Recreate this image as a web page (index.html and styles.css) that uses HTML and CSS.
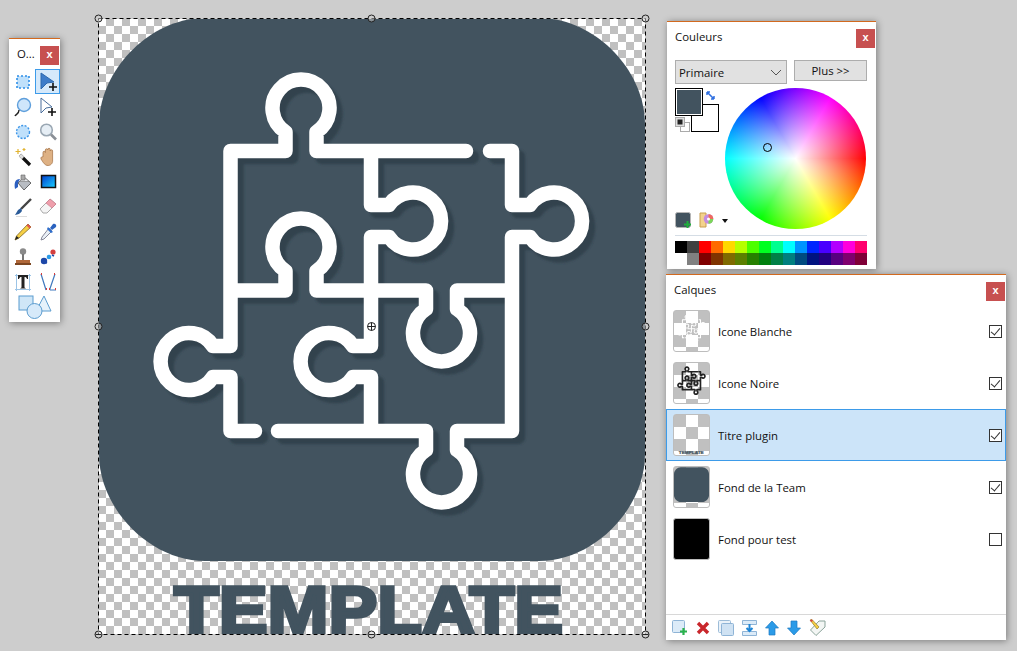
FILE: index.html
```html
<!DOCTYPE html>
<html lang="fr">
<head>
    <meta charset="UTF-8">
    <meta name="viewport" content="width=device-width, initial-scale=1.0">
    <title>Template</title>
    <link rel="stylesheet" href="styles.css">
</head>
<body>
    <!-- image being edited -->
    <div class="canvas">
        <svg class="canvas-art" viewBox="99 19 546 615">
            <defs>
                <filter id="soft"><feGaussianBlur stdDeviation="0.7"/></filter>
                <filter id="softer"><feGaussianBlur stdDeviation="1.1"/></filter>
                <path id="puzzle" fill="none" stroke-linecap="round" stroke-linejoin="round" d="M466 151H316.5V132A28.5 28.5 0 1 0 285.5 132V151H230.5V346H213A28.5 28.5 0 1 0 213 377H230.5V431H255M490 151H512V205H530A28.5 28.5 0 1 1 530 237H512V431H457V450A28.5 28.5 0 1 1 426 450V431H278M230.5 290.5H285.5V271A28.5 28.5 0 1 1 316.5 271V290.5H426V309A28.5 28.5 0 1 0 457 309V290.5H512M371 151V205H389A28.5 28.5 0 1 1 389 237H371V346H353A28.5 28.5 0 1 0 353 377H371V431"/>
                <path id="plaque" d="M205 18H539C594 18 645 69 645 125V454C645 509 594 561 539 561H205C150 561 99 509 99 454V125C99 70 150 18 205 18Z"/>
            </defs>
            <use href="#plaque" fill="#42535f"/>
            <use href="#puzzle" stroke="#33424d" stroke-width="14.5" transform="translate(6 6)" filter="url(#softer)"/>
            <use href="#puzzle" stroke="#fff" stroke-width="14.5" filter="url(#soft)"/>
            <text class="logo-title" x="174" y="633" textLength="389" lengthAdjust="spacingAndGlyphs" filter="url(#soft)">TEMPLATE</text>
        </svg>
    </div>

    <!-- selection outline and handles -->
    <svg class="selection" viewBox="0 0 1017 651">
        <rect x="98.5" y="18.5" width="547" height="616" fill="none" stroke="#000" stroke-dasharray="4 3"/>
        <g fill="#cdcdcd" fill-opacity="0.5" stroke="#222">
            <circle cx="98.5" cy="18.5" r="3.5"/>
            <circle cx="371.5" cy="18.5" r="3.5"/>
            <circle cx="645.5" cy="18.5" r="3.5"/>
            <circle cx="98.5" cy="326.5" r="3.5"/>
            <circle cx="645.5" cy="326.5" r="3.5"/>
            <circle cx="98.5" cy="634.5" r="3.5"/>
            <circle cx="371.5" cy="634.5" r="3.5"/>
            <circle cx="645.5" cy="634.5" r="3.5"/>
            <path d="M95.5 634.5h6M368.5 634.5h6M642.5 634.5h6" fill="none"/>
            <circle cx="371.5" cy="326.5" r="4" fill="#fff" fill-opacity="0.8"/>
            <path d="M371.5 322.5v8M367.5 326.5h8" fill="none"/>
        </g>
    </svg>

    <!-- tools window -->
    <div class="window tools">
        <div class="window-head tools-head">
            <span class="window-title">O...</span>
            <span class="close">x</span>
        </div>
        <div class="tool-grid">
            <span class="tool"><svg viewBox="0 0 20 20"><rect x="4" y="4" width="12" height="12" fill="#bfe0fb" stroke="#2f8fe8" stroke-width="1.6" stroke-dasharray="2 2"/></svg></span>
            <span class="tool tool-on"><svg viewBox="0 0 20 20"><path d="M3 1L16 10L9 11L3 17Z" fill="#3d7cc9" stroke="#2d68ad"/><path d="M15 11v8M11 15h8" stroke="#111" stroke-width="1.6"/></svg></span>
            <span class="tool"><svg viewBox="0 0 20 20"><circle cx="11" cy="8" r="6.5" fill="#cfe6fb" stroke="#5f9fdc" stroke-width="1.4"/><path d="M6 13C6 17 3 17 2 19" fill="none" stroke="#222" stroke-width="1.4"/></svg></span>
            <span class="tool"><svg viewBox="0 0 20 20"><path d="M3 1L14 10L8 11L3 16Z" fill="#fff" stroke="#4a6f9c"/><path d="M14 11v8M10 15h8" stroke="#111" stroke-width="1.6"/></svg></span>
            <span class="tool"><svg viewBox="0 0 20 20"><circle cx="10" cy="10" r="6.5" fill="#bfe0fb" stroke="#3c95e8" stroke-width="1.4" stroke-dasharray="2 1.5"/></svg></span>
            <span class="tool"><svg viewBox="0 0 20 20"><circle cx="8.5" cy="8" r="5.8" fill="#e6eef5" stroke="#9aa7b3" stroke-width="1.6"/><path d="M13 12.5L18 17.5" stroke="#8a8f96" stroke-width="2.6"/></svg></span>
            <span class="tool"><svg viewBox="0 0 20 20"><path d="M7 8L17 18" stroke="#111" stroke-width="3.2"/><path d="M7 8L10 11" stroke="#ddd" stroke-width="3.2"/><path d="M5 2v5M2.500 4.500h5M11 1v3M9.500 2.500h3" stroke="#e2b431" stroke-width="1.2"/></svg></span>
            <span class="tool"><svg viewBox="0 0 20 20"><path d="M5 10V5.500a1.200 1.200 0 0 1 2.400 0V3a1.200 1.200 0 0 1 2.400 0V2.500a1.200 1.200 0 0 1 2.400 0V4a1.200 1.200 0 0 1 2.400 0V13C15 17 12 18.500 10 18.500C7 18.500 5.500 16 3 12C2.500 10 4 9.500 5 10Z" fill="#deb184" stroke="#a9794e" stroke-width="0.8"/></svg></span>
            <span class="tool"><svg viewBox="0 0 20 20"><path d="M11 5L18 11L11 18L5 11Z" fill="#b9bdc3" stroke="#666"/><path d="M6.500 9.500H16L11 5Z" fill="#e7e9ec" stroke="#777" stroke-width="0.6"/><path d="M8 3h4v5h-4z" fill="#aaa" stroke="#666" stroke-width="0.6"/><path d="M7 7C2 7 1 11 2 17L5 15V11Z" fill="#2c5fc0"/></svg></span>
            <span class="tool"><svg viewBox="0 0 20 20"><defs><linearGradient id="blend" x1="0" y1="0" x2="1" y2="1"><stop offset="0" stop-color="#003ccf"/><stop offset="1" stop-color="#19d1ff"/></linearGradient></defs><rect x="3.500" y="3.500" width="14" height="12" fill="url(#blend)" stroke="#111" stroke-width="1.500"/></svg></span>
            <span class="tool"><svg viewBox="0 0 20 20"><path d="M18 2L8 12" stroke="#444" stroke-width="2.400"/><path d="M8 11L5 13C4 15 3 16 2 18C5 17.500 7 17 9 14Z" fill="#2b5b98"/><path d="M3 19.500H14" stroke="#ddd"/></svg></span>
            <span class="tool"><svg viewBox="0 0 20 20"><path d="M12 2L18 7L9 16H5L2 12Z" fill="#f5f5f5" stroke="#aaa"/><path d="M12 2L18 7L14 11L8 6Z" fill="#ef9fac" stroke="#cf7b8c" stroke-width="0.700"/></svg></span>
            <span class="tool"><svg viewBox="0 0 20 20"><path d="M15 2L18 5L6 16L2 18L3.500 14Z" fill="#f5cf45" stroke="#7d6420" stroke-width="0.800"/><path d="M15 2L18 5L16.500 6.500L13.500 3.500Z" fill="#e0564f"/><path d="M2 18L3.500 14L6 16Z" fill="#222"/></svg></span>
            <span class="tool"><svg viewBox="0 0 20 20"><path d="M11 6L14 9L6 17L3 18L4 15Z" fill="#e8eef5" stroke="#889"/><path d="M10 5L15 10L13 11L9 7Z" fill="#2d6fd0"/><path d="M12 6L15 2C17 1 19 3 18 5L14 8Z" fill="#2a62bf"/></svg></span>
            <span class="tool"><svg viewBox="0 0 20 20"><circle cx="10" cy="4.500" r="3.200" fill="#8a8a8a"/><path d="M9 7h2v6H9z" fill="#777"/><path d="M3 13H17V16H3Z" fill="#b0683a"/><path d="M2 16H18V18H2Z" fill="#7d4722"/></svg></span>
            <span class="tool"><svg viewBox="0 0 20 20"><circle cx="15" cy="5" r="2.600" fill="#d33f3f"/><circle cx="6" cy="14" r="3.200" fill="#1d47a8"/><circle cx="11" cy="10" r="2.300" fill="#2a9be8"/><path d="M7 15L9 16M14 8L16 9" stroke="#1d47a8" stroke-width="1.500"/></svg></span>
            <span class="tool"><svg viewBox="0 0 20 20"><path d="M2 3.500H18M2 17.500H18M3.500 2V19M16.500 2V19" stroke="#9cc4e6"/><path d="M5 3H15V7H14C13.500 5.500 13 5 11.500 5V15.500L13 16.500H7L8.500 15.500V5C7 5 6.500 5.500 6 7H5Z" fill="#222"/></svg></span>
            <span class="tool"><svg viewBox="0 0 20 20"><path d="M3 2L8 18M11.500 18L17 2M12 18H18" fill="none" stroke="#3f78bd" stroke-width="1.200"/><path d="M3 2h1M8 17h1M11 17h1M16 2h1M17 17h1" stroke="#d83b3b" stroke-width="2"/></svg></span>
            <span class="tool tool-wide"><svg viewBox="0 0 34 24"><rect x="1" y="1" width="14" height="14" fill="#cfe6f7" stroke="#5b9ccf"/><path d="M26 1L33 16H18Z" fill="#e6f2fb" stroke="#5b9ccf"/><circle cx="16.500" cy="16" r="7.500" fill="#d7eafa" stroke="#5b9ccf"/></svg></span>
        </div>
    </div>

    <!-- colours window -->
    <div class="window colours">
        <div class="window-head">
            <span class="window-title">Couleurs</span>
            <span class="close">x</span>
        </div>
        <div class="colour-controls">
            <div class="fake-select">
                <span>Primaire</span>
                <svg width="12" height="7" viewBox="0 0 12 7"><path d="M1 1L6 6L11 1" fill="none" stroke="#555"/></svg>
            </div>
            <div class="fake-button">Plus &gt;&gt;</div>
        </div>
        <div class="picker">
            <div class="swatches">
                <span class="swatch swatch-back"></span>
                <span class="swatch swatch-front"></span>
                <svg class="swap" width="10" height="10" viewBox="0 0 10 10"><path d="M1 1L8 8M1 1h3M1 1v3M8 8h-3M8 8v-3" fill="none" stroke="#2f6fe0" stroke-width="1.500"/></svg>
                <svg class="reset" width="15" height="15" viewBox="0 0 15 15"><rect x="5.500" y="5.500" width="9" height="9" fill="#fff" stroke="#aaa"/><rect x="0.500" y="0.500" width="9" height="9" fill="#ddd" stroke="#aaa"/><rect x="2.500" y="2.500" width="5" height="5" fill="#222"/></svg>
            </div>
            <div class="wheel"><span class="wheel-dot"></span></div>
        </div>
        <div class="colour-actions">
            <svg width="17" height="17" viewBox="0 0 17 17"><rect x="0.500" y="0.500" width="15" height="15" rx="2" fill="#42535f" stroke="#b5b5b5"/><path d="M12.500 9v7M9 12.500h7" stroke="#1fae3c" stroke-width="2"/></svg>
            <svg width="16" height="17" viewBox="0 0 16 17"><path d="M1 1H7V15H1Z" fill="#f3d28d" stroke="#c89f51"/><circle cx="9.500" cy="7" r="4.800" fill="#c58de0"/><path d="M9.500 7V2.200A4.800 4.800 0 0 1 14.300 7Z" fill="#ef6a5f"/><path d="M9.500 7H14.300A4.800 4.800 0 0 1 9.500 11.800Z" fill="#7bd65a"/><circle cx="9.500" cy="7" r="1.500" fill="#fff"/></svg>
            <span class="caret"></span>
        </div>
        <div class="palette" id="palette"></div>
    </div>

    <!-- layers window -->
    <div class="window layers">
        <div class="window-head">
            <span class="window-title">Calques</span>
            <span class="close">x</span>
        </div>
        <div class="layer-list">
            <div class="layer">
                <span class="thumb checker"><svg viewBox="99 19 546 615"><use href="#puzzle" stroke="#fff" stroke-width="16"/></svg></span>
                <span class="layer-name">Icone Blanche</span>
                <span class="check on"></span>
            </div>
            <div class="layer">
                <span class="thumb checker"><svg viewBox="99 19 546 615"><use href="#puzzle" stroke="#222" stroke-width="26"/></svg></span>
                <span class="layer-name">Icone Noire</span>
                <span class="check on"></span>
            </div>
            <div class="layer layer-on">
                <span class="thumb checker"><svg viewBox="99 19 546 615"><text class="logo-title" x="174" y="630" textLength="389" lengthAdjust="spacingAndGlyphs">TEMPLATE</text></svg></span>
                <span class="layer-name">Titre plugin</span>
                <span class="check on"></span>
            </div>
            <div class="layer">
                <span class="thumb checker"><svg viewBox="99 19 546 615"><use href="#plaque" fill="#42535f"/></svg></span>
                <span class="layer-name">Fond de la Team</span>
                <span class="check on"></span>
            </div>
            <div class="layer">
                <span class="thumb thumb-black"></span>
                <span class="layer-name">Fond pour test</span>
                <span class="check"></span>
            </div>
        </div>
        <div class="layer-actions">
            <svg width="16" height="16" viewBox="0 0 16 16"><rect x="0.500" y="0.500" width="12" height="12" rx="1" fill="#dcebf8" stroke="#8fb4d6"/><path d="M11.500 8v7M8 11.500h7" stroke="#2ab24b" stroke-width="2.200"/></svg>
            <svg width="14" height="14" viewBox="0 0 14 14"><path d="M2 2L12 12M12 2L2 12" stroke="#c9272c" stroke-width="3.400"/></svg>
            <svg width="16" height="16" viewBox="0 0 16 16"><rect x="0.500" y="0.500" width="12" height="12" rx="1" fill="#eaf2f9" stroke="#9dbcd8"/><rect x="3.500" y="3.500" width="12" height="12" rx="1" fill="#cfe2f3" stroke="#8fb4d6"/></svg>
            <svg width="15" height="16" viewBox="0 0 15 16"><path d="M0.500 0.500H14.500V4.500H0.500ZM0.500 11.500H14.500V15.500H0.500Z" fill="#dcebf8" stroke="#8fb4d6"/><path d="M7.500 4v7M4.500 8L7.500 11L10.500 8" fill="none" stroke="#1f86d6" stroke-width="2"/></svg>
            <svg width="14" height="16" viewBox="0 0 14 16"><path d="M7 1L13.500 8H10V15H4V8H0.500Z" fill="#2b9be8" stroke="#1d78c2" stroke-width="0.700"/></svg>
            <svg width="14" height="16" viewBox="0 0 14 16"><path d="M7 15L13.500 8H10V1H4V8H0.500Z" fill="#2b9be8" stroke="#1d78c2" stroke-width="0.700"/></svg>
            <svg width="17" height="17" viewBox="0 0 17 17"><path d="M10 2H16V8L7 16.500L1.500 11Z" fill="#f3f6f4" stroke="#8aa39a"/><path d="M1 1L3 0.500L10 8L8 10Z" fill="#f5cf45" stroke="#8a6d1e" stroke-width="0.600"/><path d="M1 1L3 0.500L4 2L2 3Z" fill="#d8443e"/></svg>
        </div>
    </div>

    <script src="palette.js"></script>
</body>
</html>
```

FILE: palette.js
```js
const paletteColours = [
    '#000000', '#404040', '#ff0000', '#ff6a00', '#ffd800', '#b6ff00', '#4cff00', '#00ff21',
    '#00ff90', '#00ffff', '#0094ff', '#0026ff', '#4800ff', '#b200ff', '#ff00dc', '#ff006e',
    '#ffffff', '#808080', '#7f0000', '#7f3300', '#7f6a00', '#5b7f00', '#267f00', '#007f0e',
    '#007f46', '#007f7f', '#004a7f', '#00137f', '#21007f', '#57007f', '#7f006e', '#7f0037'
];

const palette = document.getElementById('palette');

paletteColours.forEach(function(colour) {
    const cell = document.createElement('span');
    cell.style.backgroundColor = colour;
    palette.appendChild(cell);
});
```

FILE: styles.css
```css
body {
    background-color: #cdcdcd;
    font-family: "Open Sans", "Noto Sans", sans-serif;
    font-size: 11.4px;
    color: #111;
    margin: 0;
    padding: 0;
    height: 651px;
    overflow: hidden;
}

/* image */
.canvas {
    position: absolute;
    left: 99px;
    top: 19px;
    width: 546px;
    height: 615px;
    background-color: #fff;
    background-image: conic-gradient(#c0c0c0 25%, #fff 0 50%, #c0c0c0 0 75%, #fff 0);
    background-size: 16px 16px;
    background-position: -1px -1px;
}

.canvas-art {
    display: block;
    width: 100%;
    height: 100%;
}

.logo-title {
    font-family: "Liberation Sans", Arial, sans-serif;
    font-size: 66px;
    font-weight: bold;
    fill: #42535f;
    stroke: #42535f;
    stroke-width: 3.5px;
}

.selection {
    position: absolute;
    left: 0;
    top: 0;
    width: 1017px;
    height: 651px;
}

/* floating windows */
.window {
    position: absolute;
    background-color: #fff;
    border-top: 1px solid #d2691e;
    box-shadow: 1px 1px 7px rgba(0, 0, 0, 0.4);
    box-sizing: border-box;
}

.window-head {
    display: flex;
    justify-content: space-between;
    align-items: flex-start;
    padding: 7px 1px 0 8px;
}

.window-title {
    line-height: 16px;
}

.close {
    width: 19px;
    height: 19px;
    background-color: #c75050;
    color: #fff;
    font-family: "Liberation Sans", Arial, sans-serif;
    font-size: 11px;
    font-weight: bold;
    line-height: 17px;
    text-align: center;
}

/* tools */
.tools {
    left: 9px;
    top: 38px;
    width: 51px;
    height: 284px;
}

.tools-head {
    box-sizing: border-box;
    height: 30px;
}

.tool-grid {
    display: grid;
    grid-template-columns: 25px 25px;
    grid-auto-rows: 25px;
    padding-left: 1px;
}

.tool {
    display: flex;
    align-items: center;
    justify-content: center;
    box-sizing: border-box;
}

.tool svg {
    width: 20px;
    height: 20px;
}

.tool-on {
    background-color: #d5e9fb;
    border: 1px solid #3d9be9;
}

.tool-wide {
    grid-column: span 2;
}

.tool-wide svg {
    width: 34px;
    height: 24px;
}

/* colours */
.colours {
    left: 667px;
    top: 21px;
    width: 209px;
    height: 248px;
}

.colour-controls {
    display: flex;
    align-items: flex-start;
    gap: 7px;
    margin-top: 12px;
    padding-left: 8px;
}

.fake-select,
.fake-button {
    background-color: #e1e1e1;
    border: 1px solid #adadad;
    box-sizing: border-box;
}

.fake-select {
    display: flex;
    justify-content: space-between;
    align-items: center;
    width: 112px;
    height: 24px;
    padding: 0 4px 0 3px;
}

.fake-button {
    width: 73px;
    height: 21px;
    line-height: 19px;
    text-align: center;
}

.picker {
    display: flex;
    gap: 6px;
    margin-top: 4px;
    padding-left: 8px;
}

.swatches {
    position: relative;
    width: 44px;
    height: 44px;
}

.swatch {
    position: absolute;
    box-sizing: border-box;
    border: 1px solid #000;
}

.swatch-front {
    left: 0;
    top: 0;
    width: 28px;
    height: 28px;
    background-color: #42535f;
    box-shadow: inset 0 0 0 1px #fff;
}

.swatch-back {
    left: 16px;
    top: 16px;
    width: 28px;
    height: 28px;
    background-color: #fff;
}

.swap {
    position: absolute;
    left: 31px;
    top: 3px;
}

.reset {
    position: absolute;
    left: 0;
    top: 29px;
}

.wheel {
    position: relative;
    width: 141px;
    height: 141px;
    border-radius: 50%;
    background:
        radial-gradient(closest-side, #fff, rgba(255, 255, 255, 0)),
        conic-gradient(from 90deg, #f00, #ff0, #0f0, #0ff, #00f, #f0f, #f00);
}

.wheel-dot {
    position: absolute;
    left: 38px;
    top: 55px;
    width: 9px;
    height: 9px;
    box-sizing: border-box;
    border: 1px solid #000;
    border-radius: 50%;
}

.colour-actions {
    display: flex;
    align-items: center;
    gap: 7px;
    margin-top: -17px;
    padding-left: 8px;
    height: 17px;
}

.caret {
    border-left: 3px solid transparent;
    border-right: 3px solid transparent;
    border-top: 4px solid #111;
}

.palette {
    display: grid;
    grid-template-columns: repeat(16, 12px);
    grid-auto-rows: 12px;
    margin: 6px 9px 0 8px;
    padding-top: 5px;
    border-top: 1px solid #d5dde5;
}

/* layers */
.layers {
    left: 666px;
    top: 274px;
    width: 340px;
    height: 366px;
    display: flex;
    flex-direction: column;
}

.layers .window-head {
    height: 30px;
    box-sizing: border-box;
}

.layer-list {
    flex: 1;
}

.layer {
    display: flex;
    align-items: center;
    height: 52px;
    box-sizing: border-box;
    padding: 0 3px 0 7px;
}

.layer-on {
    background-color: #cce4f9;
    outline: 1px solid #3d9be9;
    outline-offset: -1px;
}

.thumb {
    width: 37px;
    height: 42px;
    box-sizing: border-box;
    border: 1px solid #bdbdbd;
    border-radius: 3px;
    overflow: hidden;
}

.thumb svg {
    display: block;
    width: 100%;
    height: 100%;
}

.checker {
    background-color: #fff;
    background-image: conic-gradient(#fff 25%, #c0c0c0 0 50%, #fff 0 75%, #c0c0c0 0);
    background-size: 24px 24px;
}

.thumb-black {
    background-color: #000;
}

.layer-name {
    flex: 1;
    margin-left: 8px;
}

.check {
    position: relative;
    width: 13px;
    height: 13px;
    margin-right: 1px;
    box-sizing: border-box;
    border: 1px solid #333;
    background-color: #fff;
}

.check.on::after {
    content: "";
    position: absolute;
    left: 3px;
    top: 0;
    width: 4px;
    height: 8px;
    border: solid #333;
    border-width: 0 1px 1px 0;
    transform: rotate(40deg);
}

.layer-actions {
    display: flex;
    align-items: center;
    gap: 8px;
    height: 25px;
    padding-left: 6px;
    border-top: 1px solid #d8d8d8;
}
```
